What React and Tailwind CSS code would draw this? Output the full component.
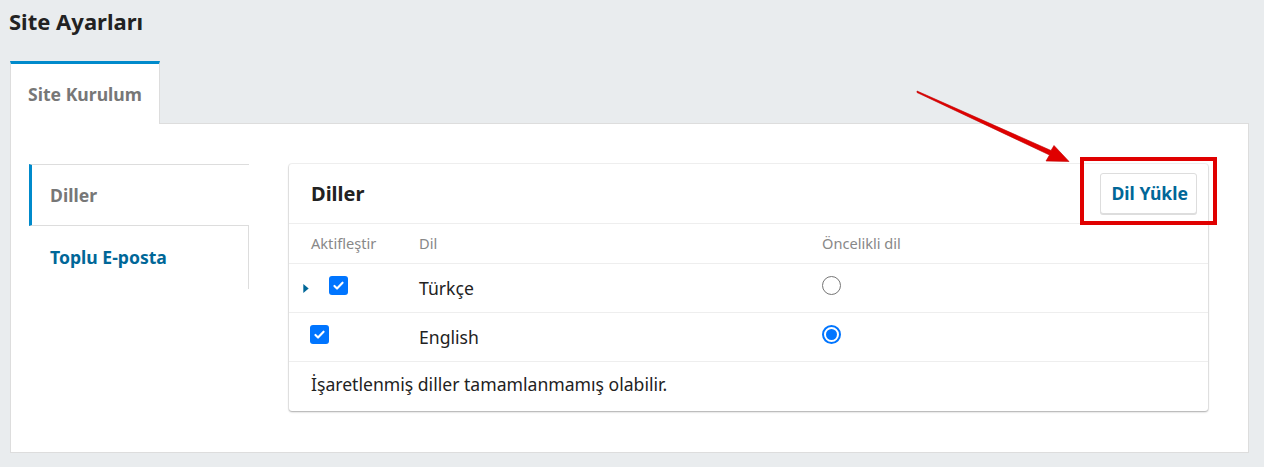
import React from 'react';

const font = { fontFamily: '"Noto Sans", "Open Sans", sans-serif' };

const Check = ({ className }) => (
  <span className={`flex h-[19px] w-[19px] items-center justify-center rounded-[3px] bg-[#0075ff] ${className || ''}`}>
    <svg viewBox="0 0 16 16" className="h-[13px] w-[13px]" fill="none" stroke="white" strokeWidth="2.6" strokeLinecap="round" strokeLinejoin="round">
      <path d="M3 8.5l3.2 3.2L13 4.5" />
    </svg>
  </span>
);

const Radio = ({ checked }) =>
  checked ? (
    <span className="flex h-[19px] w-[19px] items-center justify-center rounded-full border-2 border-[#0075ff] bg-white">
      <span className="h-[11px] w-[11px] rounded-full bg-[#0075ff]" />
    </span>
  ) : (
    <span className="block h-[19px] w-[19px] rounded-full border border-[#767676] bg-white" />
  );

export default function App() {
  return (
    <div className="relative h-[467px] w-[1264px] overflow-hidden bg-[#e9ecee] text-[#222]" style={font}>
      <div className="pl-[10px] pr-[15px]">
        <h1 className="-ml-[1px] h-[61px] pt-[4px] text-[22px] font-bold leading-[34px] text-[#222]">Site Ayarları</h1>

        <div className="flex">
          <div className="relative z-10 -mb-px flex h-[63px] w-[150px] items-center border-x border-t-[3px] border-x-[#ddd] border-t-[#008acb] bg-white pl-[17px] text-[17.6px] font-bold text-[#777]">
            Site Kurulum
          </div>
        </div>

        <div className="flex h-[330px] border border-[#ddd] bg-white pl-[18px] pr-[40px] pt-[40px]">
          <nav className="w-[220px] shrink-0">
            <div className="flex h-[62px] items-center border-t border-b border-[#ddd] border-l-[3px] border-l-[#008acb] pl-[18px] text-[17.6px] font-bold text-[#777]">
              Diller
            </div>
            <div className="flex h-[63px] items-center border-r border-[#ddd] pl-[21px] text-[17.6px] font-bold text-[#006798]">
              Toplu E-posta
            </div>
          </nav>

          <div className="ml-[40px] h-[247px] flex-1 rounded-[3px] bg-white shadow-[0_1px_2px_rgba(0,0,0,0.3),0_0_0_1px_rgba(0,0,0,0.05)]">
            <div className="flex h-[60px] items-center justify-between border-b border-[#eee] pl-[22px] pr-[11px]">
              <h2 className="text-[20px] font-bold text-[#222]">Diller</h2>
              <button className="h-[41px] rounded-[3px] border border-[#ddd] bg-white pl-[10px] pr-[8px] text-[17.6px] font-bold text-[#006798] shadow-[0_1px_0_#ddd]">
                Dil Yükle
              </button>
            </div>

            <div className="flex h-[40px] items-center border-b border-[#eee] text-[14.6px] text-[#888]">
              <span className="w-[130px] pl-[22px]">Aktifleştir</span>
              <span className="w-[403px]">Dil</span>
              <span>Öncelikli dil</span>
            </div>

            <div className="flex h-[49px] items-center border-b border-[#eee] text-[17.6px]">
              <div className="flex w-[130px] items-center pl-[14px]">
                <svg viewBox="0 0 6 10" className="mr-[20px] h-[9px] w-[6px]" fill="#006798">
                  <path d="M0 0l6 5-6 5z" />
                </svg>
                <Check className="-mt-[5px]" />
              </div>
              <span className="w-[403px] text-[#222]">Türkçe</span>
              <span className="-mt-[5px]"><Radio /></span>
            </div>

            <div className="flex h-[49px] items-center border-b border-[#eee] text-[17.6px]">
              <div className="flex w-[130px] items-center pl-[21px]">
                <Check className="-mt-[5px]" />
              </div>
              <span className="w-[403px] text-[#222]">English</span>
              <span className="-mt-[5px]"><Radio checked /></span>
            </div>

            <p className="pl-[22px] pt-[9px] text-[17.6px] text-[#222]">İşaretlenmiş diller tamamlanmamış olabilir.</p>
          </div>
        </div>
      </div>

      {/* highlight box */}
      <div className="absolute left-[1080px] top-[157px] h-[68px] w-[137px] border-[4px] border-[#e00000]" />

      {/* arrow */}
      <svg className="absolute left-0 top-0" width="1264" height="467">
        <polygon
          points="917,91 1051,150.5 1054,145.5 1069,161.5 1046,161 1049.5,155 917,92.5"
          fill="#e00000"
          stroke="#c00000"
          strokeWidth="0.6"
          strokeLinejoin="round"
        />
      </svg>
    </div>
  );
}
